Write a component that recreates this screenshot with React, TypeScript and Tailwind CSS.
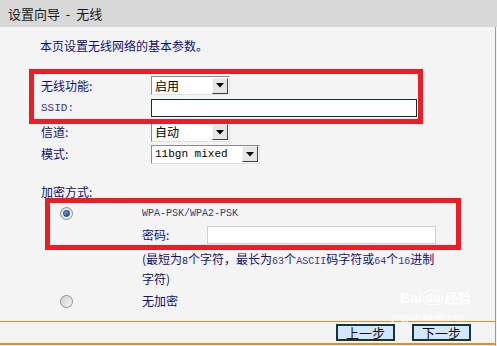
import React from "react";

const cjk = { fontFamily: '"Noto Sans CJK SC", "Noto Sans", sans-serif' };
const mono = { fontFamily: '"Liberation Mono", "Noto Sans CJK SC", monospace' };
const sans = { fontFamily: '"Liberation Sans", sans-serif' };

function Select({ value, width, monoText }: { value: string; width: string; monoText?: boolean }) {
  return (
    <div className={`${width} h-[19px] flex items-center bg-white border border-[#8a8a8a] border-r-[#e0e0e0] border-b-[#e0e0e0]`}>
      <span
        className={`flex-1 pl-[3px] leading-none text-black ${monoText ? "text-[11px] text-[#101060]" : "text-[12px]"}`}
        style={monoText ? mono : cjk}
      >
        {value}
      </span>
      <div className="w-[16px] h-[16px] mr-[1px] bg-[#e6e6e6] border border-[#f4f4f4] border-r-[#404040] border-b-[#404040] flex items-center justify-center">
        <svg width="8" height="5" viewBox="0 0 8 5">
          <path d="M0 0 L8 0 L4 4.5 Z" fill="#000" />
        </svg>
      </div>
    </div>
  );
}

function Radio({ checked }: { checked?: boolean }) {
  return (
    <div className="w-[13px] h-[13px] rounded-full border border-[#8d8d8d] bg-gradient-to-br from-[#d8d8d8] to-[#f8f8f8] flex items-center justify-center">
      {checked ? (
        <div className="w-[7px] h-[7px] rounded-full bg-gradient-to-br from-[#6bb8f0] to-[#0b4f8c] border border-[#173d63]" />
      ) : (
        <div className="w-[9px] h-[9px] rounded-full bg-gradient-to-br from-[#cfcfcf] to-[#f2f2f2]" />
      )}
    </div>
  );
}

export default function App() {
  return (
    <div className="relative w-[497px] h-[346px] bg-[#f4f4f4] flex flex-col overflow-hidden" style={cjk}>
      <div className="h-[27px] bg-[#d8d8d8] flex items-center pl-[8px] text-[13px] text-[#1a1a1a] shrink-0 whitespace-pre">
        {"设置向导  -  无线"}
      </div>
      <div className="flex-1 flex flex-col border-r border-[#ee8a1c] mr-[1px]">
        <div className="flex-1 text-[12px] text-[#101070]">
          <div className="h-[16px] mt-[11px] pl-[40px] flex items-center">本页设置无线网络的基本参数。</div>
          <div className="pl-[41px]">
            <div className="mt-[22px] h-[19px] flex items-center">
              <span className="w-[110px]">无线功能:</span>
              <Select value="启用" width="w-[79px]" />
            </div>
            <div className="mt-[4px] h-[18px] flex items-center">
              <span className="w-[110px] text-[11px] text-[#333399]" style={mono}>SSID:</span>
              <div className="w-[266px] h-[18px] bg-white border border-[#0a3333]" />
            </div>
            <div className="mt-[6px] h-[18px] flex items-center">
              <span className="w-[110px]">信道:</span>
              <Select value="自动" width="w-[79px]" />
            </div>
            <div className="mt-[4px] h-[18px] flex items-center">
              <span className="w-[110px]">模式:</span>
              <Select value="11bgn mixed" width="w-[109px]" monoText />
            </div>
            <div className="mt-[21px] h-[16px] flex items-center">加密方式:</div>
          </div>
          <div className="mt-[5px] h-[16px] flex items-center pl-[60px]">
            <Radio checked />
            <span className="ml-[69px] text-[10px] text-[#3a3a70]" style={mono}>WPA-PSK/WPA2-PSK</span>
          </div>
          <div className="mt-[5px] h-[18px] flex items-center pl-[142px]">
            <span className="w-[65px]">密码:</span>
            <div className="w-[229px] h-[18px] bg-white border border-[#cfcfcf]" />
          </div>
          <div className="mt-[6px] pl-[142px] leading-[17px] whitespace-nowrap">
            <div>
              (最短为<span className="text-[10px]" style={mono}>8</span>个字符，最长为
              <span className="text-[10px] text-[#3a3a80]" style={mono}>63</span>个
              <span className="text-[10px] text-[#3a3a80]" style={mono}>ASCII</span>码字符或
              <span className="text-[10px] text-[#3a3a80]" style={mono}>64</span>个
              <span className="text-[10px] text-[#3a3a80]" style={mono}>16</span>进制
            </div>
            <div>字符)</div>
          </div>
          <div className="mt-[6px] h-[16px] flex items-center pl-[60px]">
            <Radio />
            <span className="ml-[69px]">无加密</span>
          </div>
        </div>
        <div className="h-[24px] border-t border-b-2 border-[#ee8a1c] flex items-start justify-end pr-[24px] pt-[2px] gap-[17px] shrink-0">
          <button className="w-[59px] h-[17px] bg-[#d4e6fc] border-2 border-[#12373a] text-[13px] leading-none text-[#111] flex items-center justify-center">
            上一步
          </button>
          <button className="w-[59px] h-[17px] bg-[#d4e6fc] border-2 border-[#12373a] text-[13px] leading-none text-[#111] flex items-center justify-center">
            下一步
          </button>
        </div>
        <div className="h-[1px] shrink-0" />
      </div>

      {/* red annotation boxes */}
      <div className="absolute left-[29px] top-[69px] w-[394px] h-[55px] border-[5px] border-[#ee1c25] pointer-events-none" />
      <div className="absolute left-[45px] top-[198px] w-[416px] h-[52px] border-[5px] border-[#ee1c25] pointer-events-none" />

      {/* watermark */}
      <div className="absolute left-[400px] top-[290px] pointer-events-none flex flex-col items-start">
        <div className="flex items-center text-white font-bold leading-none">
          <span className="text-[14px]" style={sans}>Bai</span>
          <span className="text-[13px] px-[1px] ml-[1px] rounded-[6px] border-[1.5px] border-white leading-none" style={sans}>du</span>
          <span className="text-[13px] ml-[2px]">经验</span>
        </div>
        <div className="text-[9px] text-white mt-[6px] ml-[-8px]" style={sans}>jingyan.baidu.com</div>
      </div>
    </div>
  );
}
